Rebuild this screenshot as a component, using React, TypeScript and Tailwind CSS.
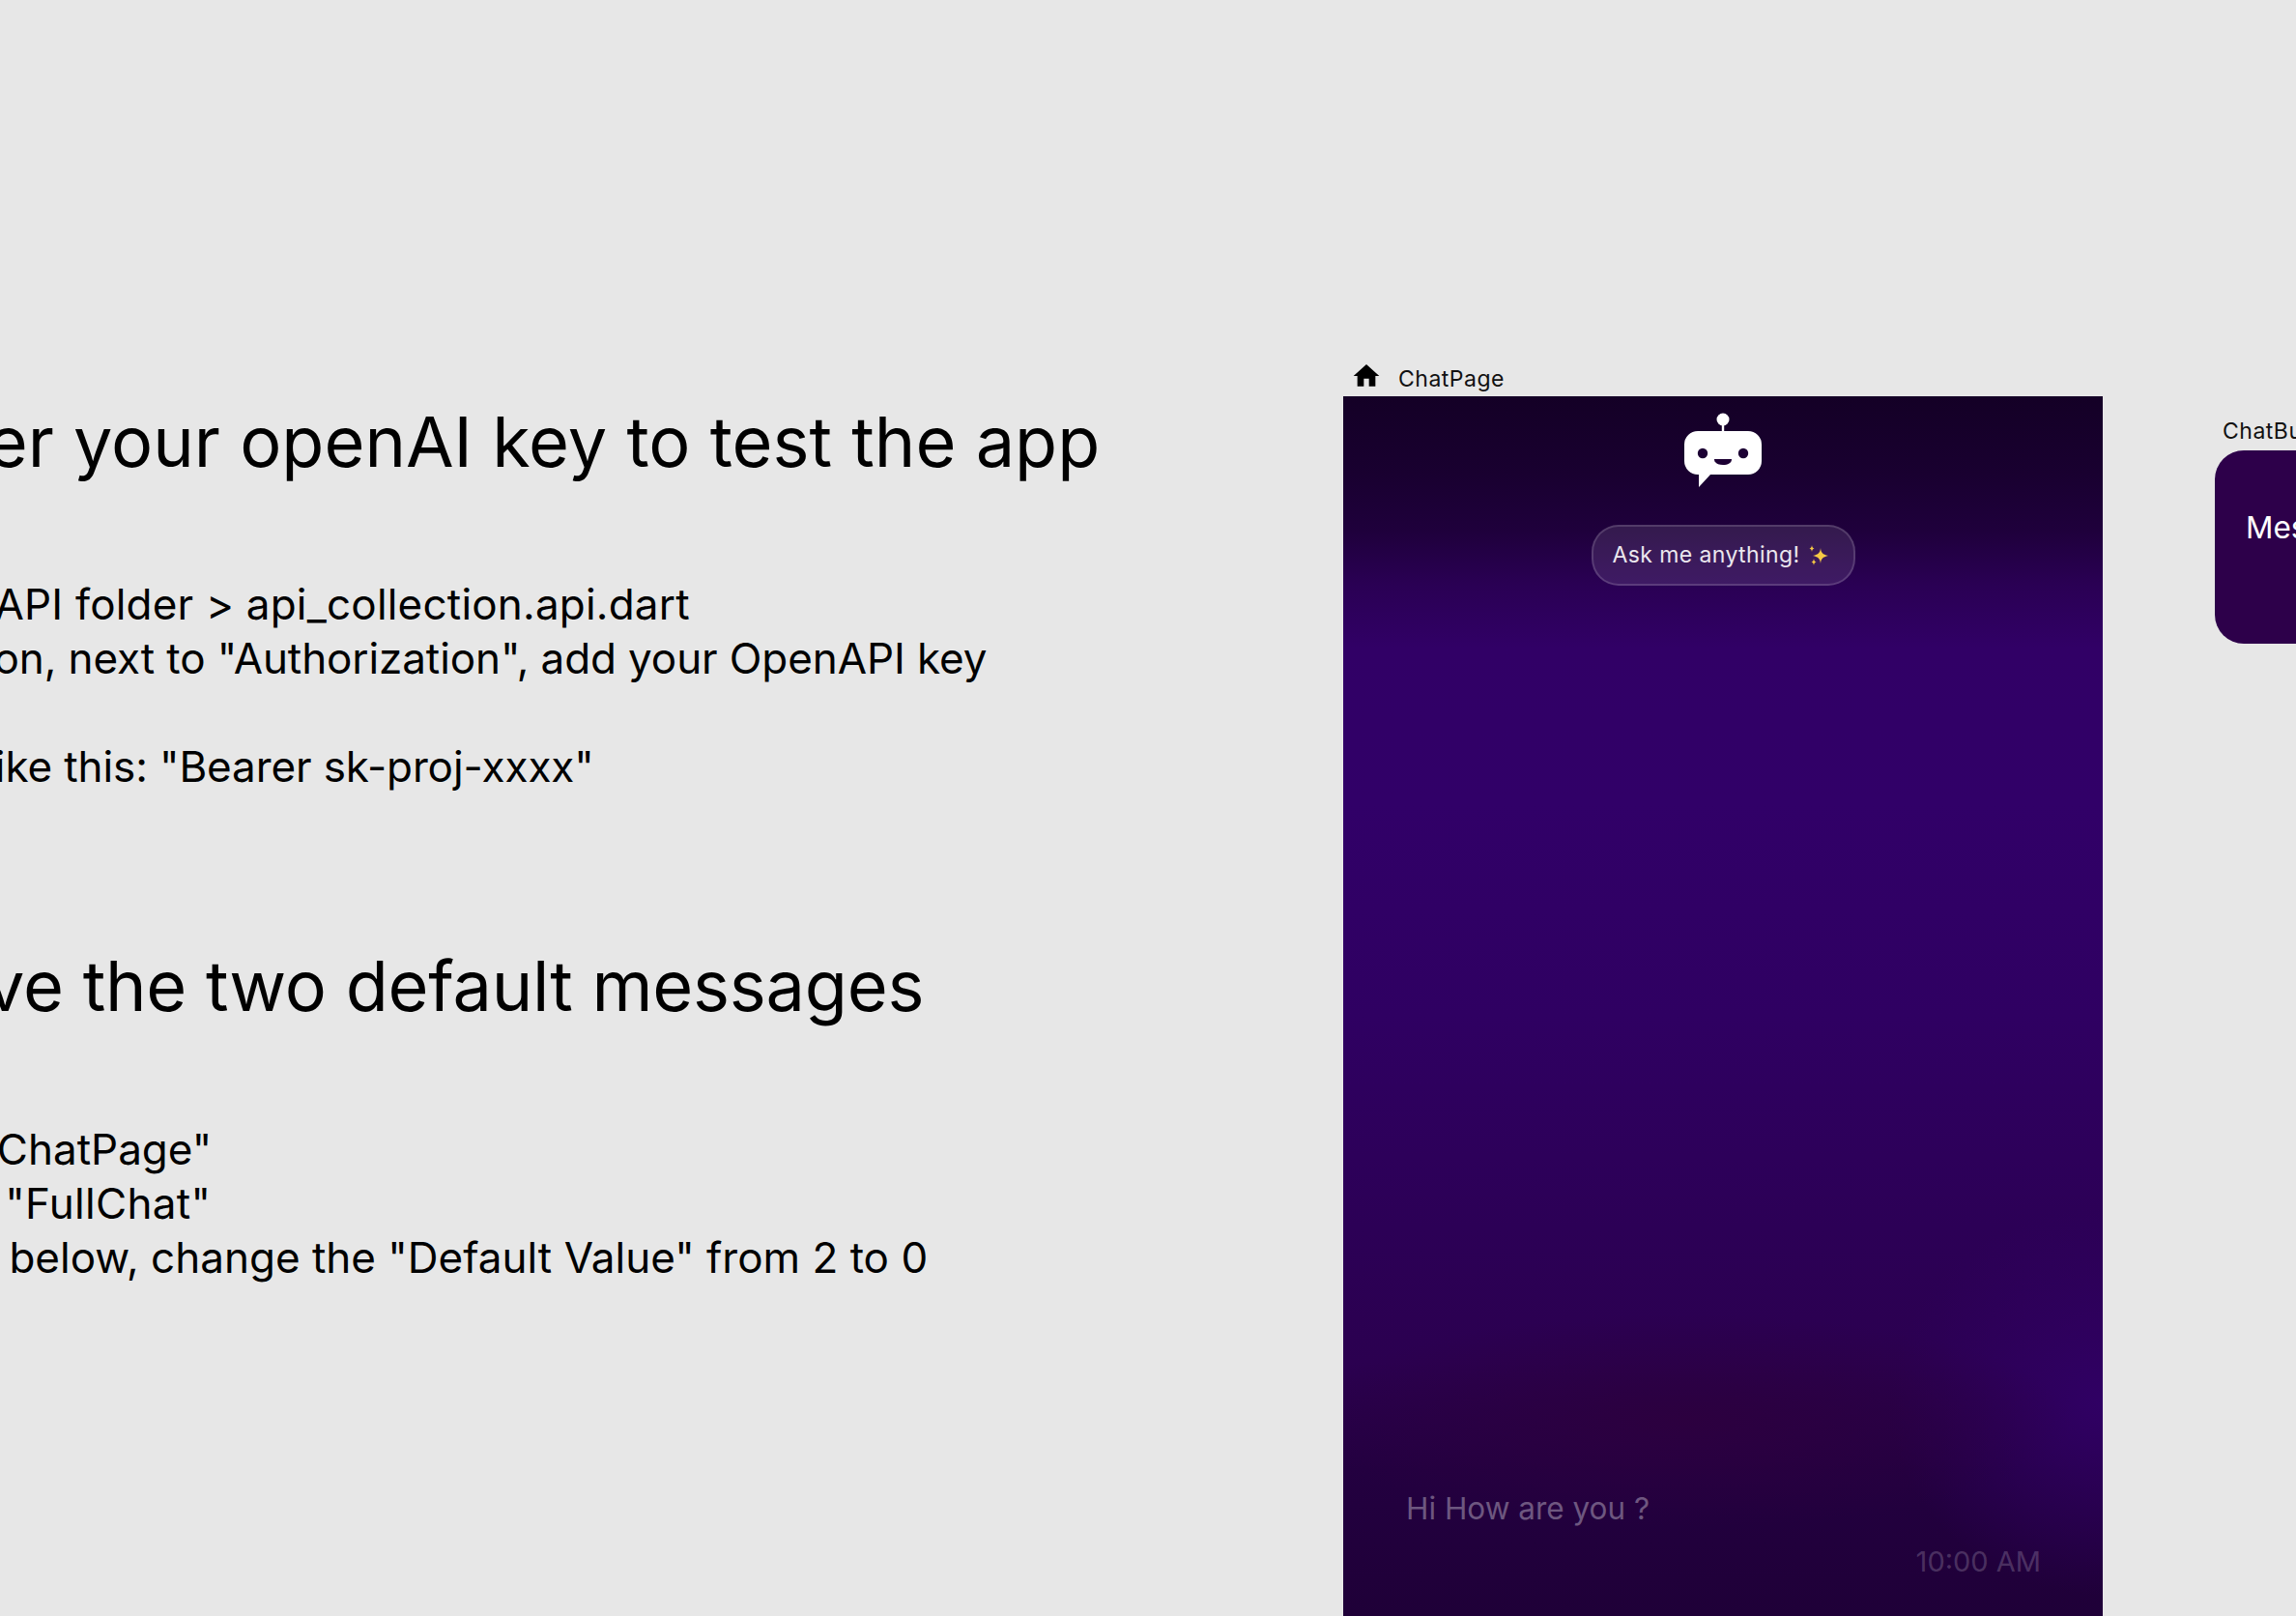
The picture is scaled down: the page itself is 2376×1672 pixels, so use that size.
const HEADING = "text-[72px] leading-[88px] text-black whitespace-nowrap";
const BODY = "text-[44px] leading-[56px] text-black whitespace-nowrap";

function BotLogo() {
  return (
    <svg width="86" height="82" viewBox="0 0 86 82" className="shrink-0">
      <circle cx="43" cy="9" r="6.5" fill="#fff" />
      <rect x="41.8" y="12" width="2.4" height="12" fill="#fff" />
      <path
        d="M17 21H69A14 14 0 0 1 83 35V52A14 14 0 0 1 69 66H30L18 79V66H17A14 14 0 0 1 3 52V35A14 14 0 0 1 17 21Z"
        fill="#fff"
      />
      <circle cx="22" cy="44" r="5.2" fill="#1c0033" />
      <circle cx="64" cy="44" r="5.2" fill="#1c0033" />
      <path d="M34 50H52C52 54 48 56 43 56S34 54 34 50Z" fill="#1c0033" />
    </svg>
  );
}

function Sparkles() {
  return (
    <svg width="22" height="22" viewBox="0 0 22 22" className="shrink-0">
      <path d="M13 3C13.6 8 15 9.6 21 11C15 12.4 13.6 14 13 19C12.4 14 11 12.4 5 11C11 9.6 12.4 8 13 3Z" fill="#f6c945" />
      <path d="M4 0C4.2 2 4.8 2.8 6.5 3.4C4.8 4 4.2 4.8 4 7C3.8 4.8 3.2 4 1.5 3.4C3.2 2.8 3.8 2 4 0Z" fill="#f6c945" />
      <path d="M6 14C6.2 16 6.8 16.8 8.5 17.4C6.8 18 6.2 18.8 6 21C5.8 18.8 5.2 18 3.5 17.4C5.2 16.8 5.8 16 6 14Z" fill="#f6c945" />
    </svg>
  );
}

function Instructions() {
  return (
    <div className="absolute left-0 top-[413px] flex flex-col font-['Inter',sans-serif]">
      <div className={`${HEADING} ml-[-122px]`}>Enter your openAI key to test the app</div>
      <div className="h-[96px]" />
      <div className={`${BODY} ml-[-131px] tracking-[0.2px]`}>Go to API folder &gt; api_collection.api.dart</div>
      <div className={`${BODY} ml-[-233px] tracking-[-0.1px]`}>In the section, next to "Authorization", add your OpenAPI key</div>
      <div className="h-[56px]" />
      <div className={`${BODY} ml-[-305px] tracking-[-0.1px]`}>It should look like this: "Bearer sk-proj-xxxx"</div>
      <div className="h-[155px]" />
      <div className={`${HEADING} ml-[-206px] tracking-[-0.25px]`}>Remove the two default messages</div>
      <div className="h-[97px]" />
      <div className={`${BODY} ml-[-148px]`}>Go to "ChatPage"</div>
      <div className={`${BODY} ml-[-139px] tracking-[0.3px]`}>Select "FullChat"</div>
      <div className={`${BODY} ml-[-246px]`}>In the panel below, change the "Default Value" from 2 to 0</div>
    </div>
  );
}

function ChatPage() {
  return (
    <div className="absolute left-[1390px] top-[374px] w-[786px] font-['Inter',sans-serif]">
      <div className="flex h-[36px] items-center gap-[17px] pl-[8px]">
        <svg width="32" height="32" viewBox="0 0 24 24" fill="#000" className="mb-[6px]">
          <path d="M10 20v-6h4v6h5v-8h3L12 3 2 12h3v8z" />
        </svg>
        <span className="text-[23px] tracking-[0.5px] text-[#111]">ChatPage</span>
      </div>
      <div className="relative flex h-[1262px] flex-col items-center overflow-hidden bg-[radial-gradient(ellipse_400px_110px_at_45%_1060px,#2c003f_0%,rgba(44,0,63,0)_100%),radial-gradient(ellipse_220px_200px_at_100%_1040px,#300064_0%,rgba(48,0,100,0)_100%),linear-gradient(180deg,#140026_0px,#190030_80px,#1f003c_140px,#2a0054_195px,#310066_260px,#310068_420px,#2f0062_640px,#2c0056_860px,#2b0050_1000px,#230040_1110px,#1f0038_1262px)]">
        <div className="mt-[15px]">
          <BotLogo />
        </div>
        <div className="mt-[36px] flex h-[63px] w-[273px] items-center gap-[9px] rounded-[28px] border-2 border-white/15 bg-white/10 pl-[20px]">
          <span className="text-[23px] tracking-[0.4px] text-white/90">Ask me anything!</span>
          <Sparkles />
        </div>
        <div className="mt-auto w-full pb-[36px] pl-[65px] pr-[64px]">
          <div className="text-[31.5px] leading-[40px] text-white/35">Hi How are you ?</div>
          <div className="mt-[15px] text-right text-[29px] leading-[40px] text-white/20">10:00 AM</div>
        </div>
      </div>
    </div>
  );
}

function ChatBubble() {
  return (
    <div className="absolute left-[2292px] top-[431px] w-[300px] font-['Inter',sans-serif]">
      <div className="h-[35px] pl-[8px] text-[23px] leading-[30px] tracking-[0.5px] text-[#111]">ChatBubble</div>
      <div className="flex h-[200px] items-start rounded-[30px] bg-[#2d004a] pl-[32px] pt-[60px] text-[31.5px] leading-[40px] text-white">
        Message
      </div>
    </div>
  );
}

export default function App() {
  return (
    <div className="relative h-[1672px] w-[2376px] overflow-hidden bg-[#e7e7e7]">
      <Instructions />
      <ChatPage />
      <ChatBubble />
    </div>
  );
}
